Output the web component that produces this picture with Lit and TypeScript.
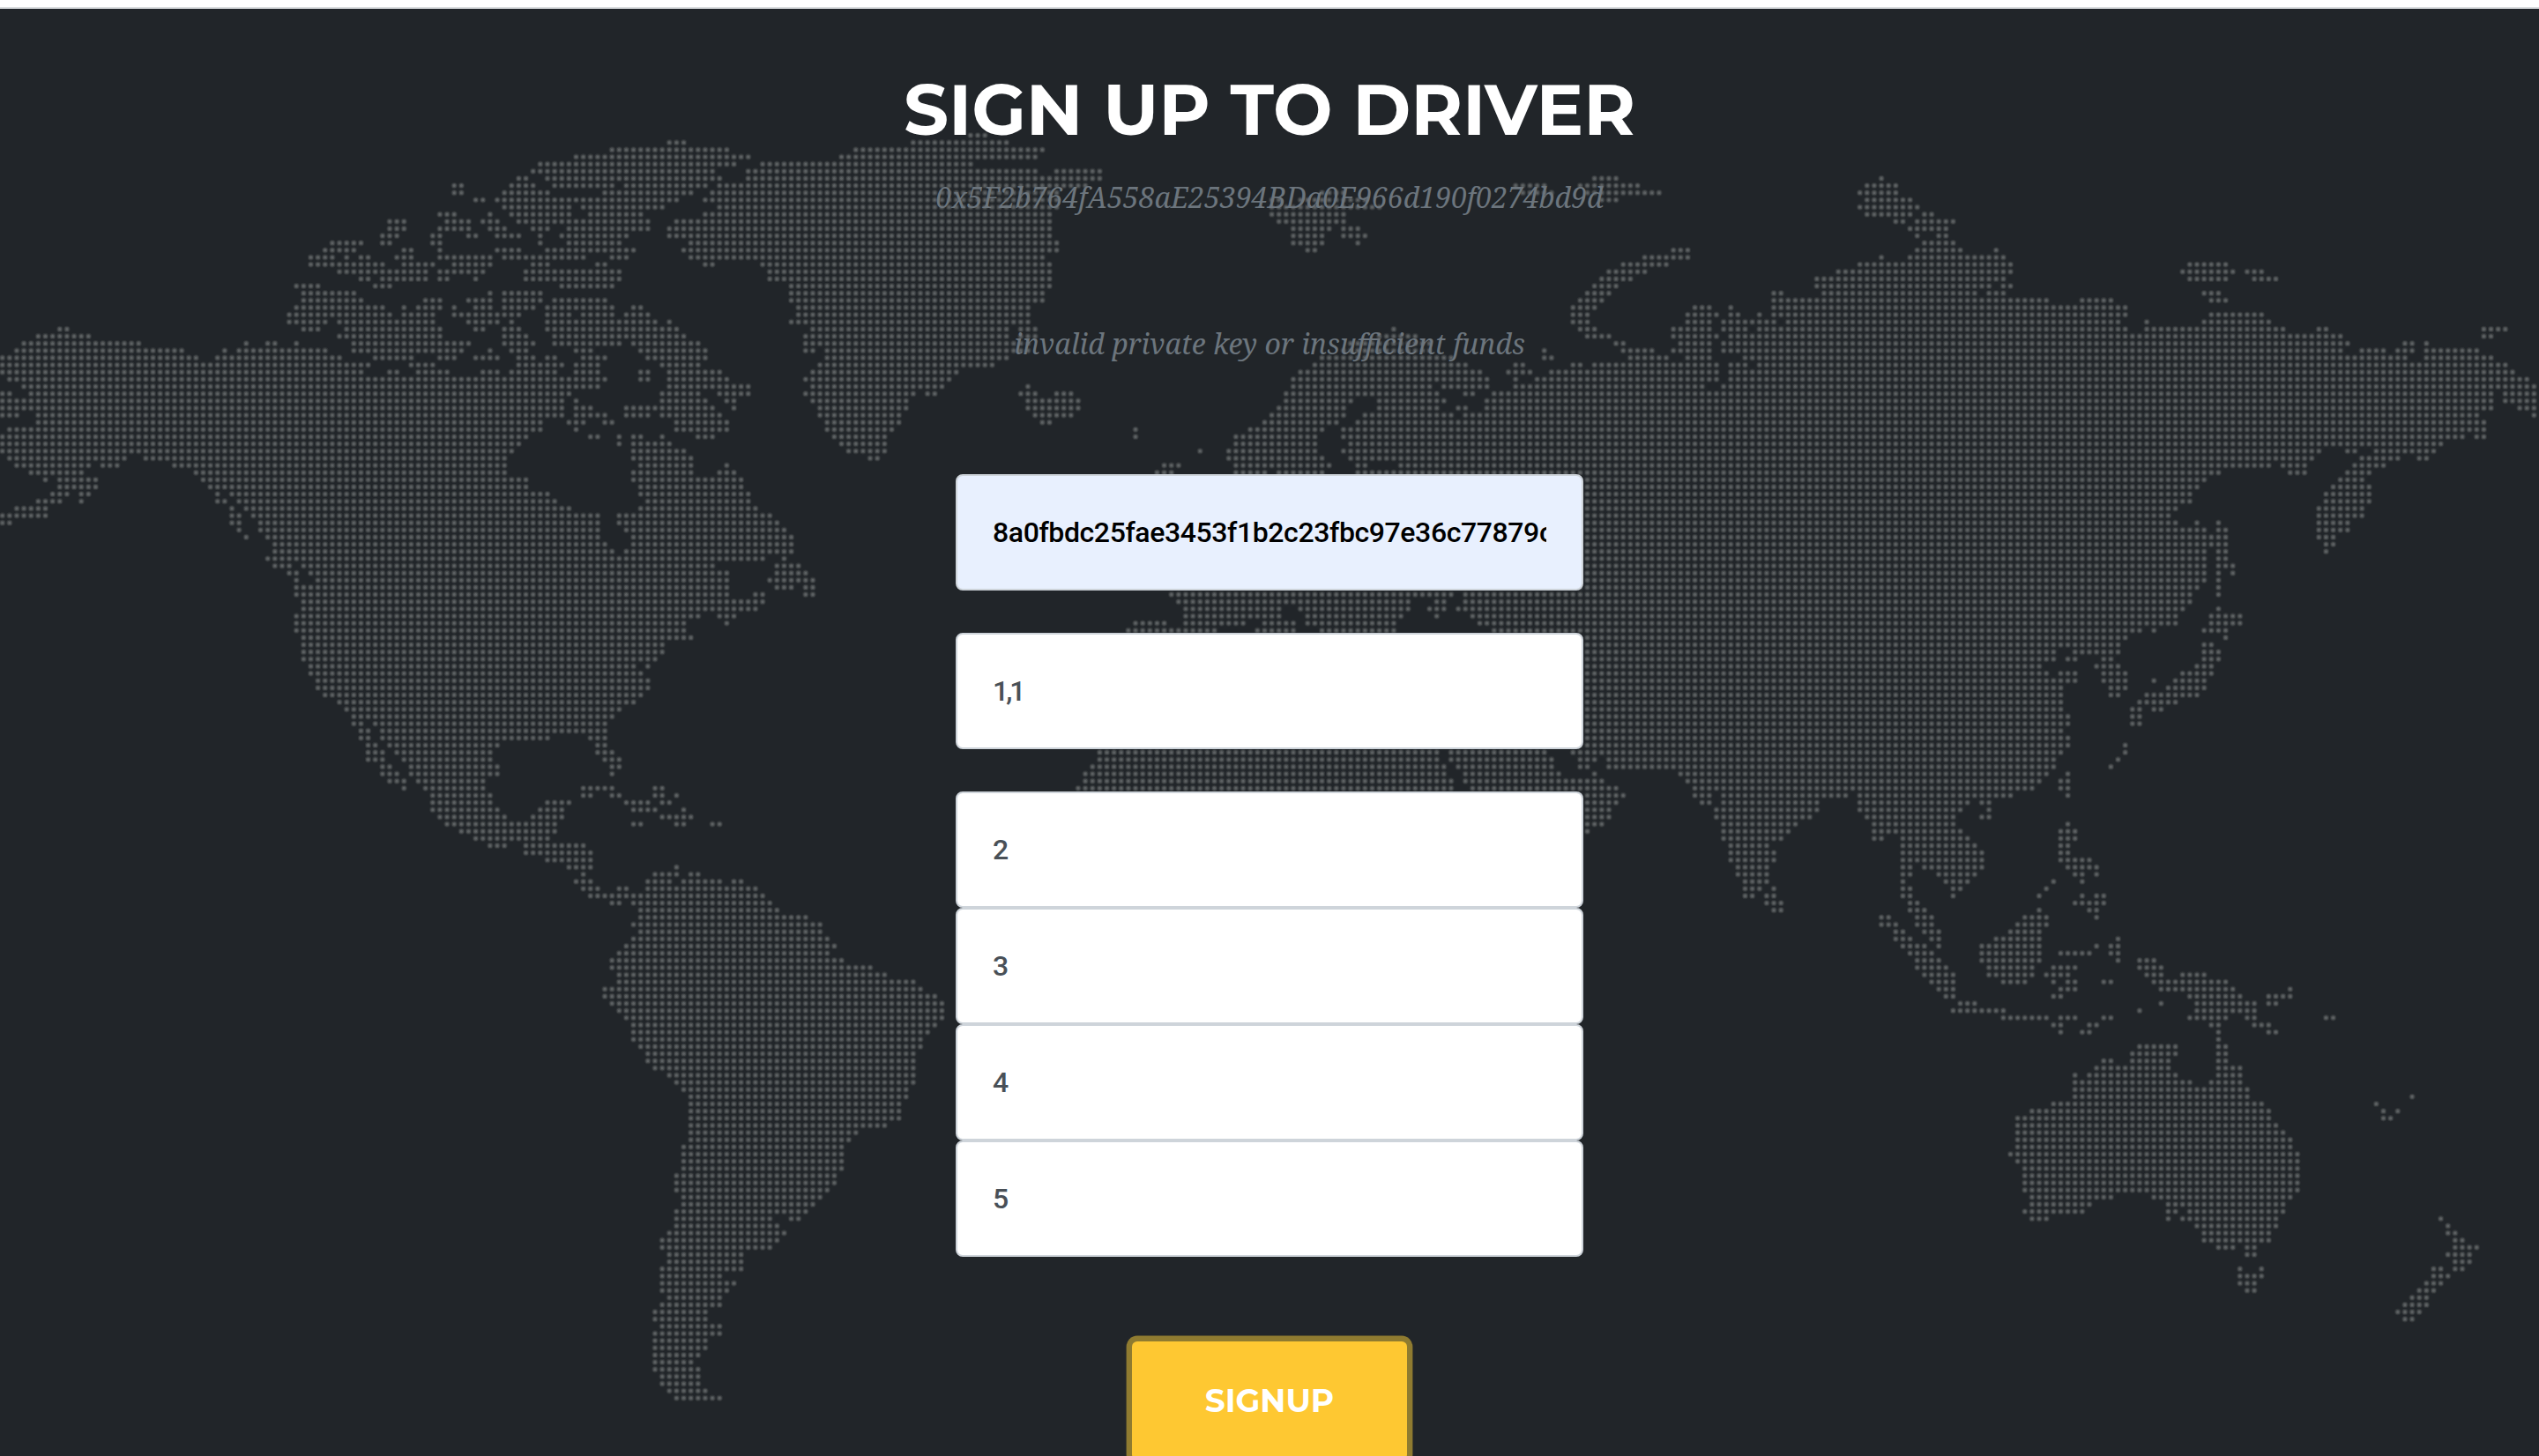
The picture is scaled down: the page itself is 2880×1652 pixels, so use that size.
import { LitElement, html, css, svg } from "lit";
import { customElement, property } from "lit/decorators.js";

/* Land cells of the dotted world map. Each line is "row: first-last first-last …",
   in grid columns. Regions may overlap. */
const AMERICAS = `
1: 93-95
2: 85-101
3: 80-104
4: 75-102
5: 74-99
6: 72-73 76-100
7: 63-64 71-74 77-85 87-98
8: 63-64 70-76 84-96
9: 66-67 69-94
10: 70-79 81-92
11: 61-63 68 71-79 82-89
12: 54-56 62-65 67-69 72-90
13: 54-56 61-65 68-70 74-76 79-90
14: 53-55 60-61 65-66 69-72 75 78-87
15: 46-50 53-54 60-61 75 79-86
16: 45-49 56-57 61 69-72 76-88
17: 43-46 48 50-51 55-57 61-68 70-81 85-87
18: 43-53 56-60 63-68 74-76 83-84
19: 47-59 61-67 73-86
20: 50-51 53-59 61-62 66 73-86
21: 41-44 52-54 78-85
22: 42-49 68 70-75
23: 42-50 59-61 65-68 70-75 77-84
24: 41-53 56 58-61 63 66-68 70-74 76-85 88-89
25: 40-54 56-60 63-72 76-79 81-85 87-90
26: 40-45 47-60 65-69 71 76-91 93
27: 8-9 42-44 48-61 66-67 70-72 76-94
28: 5-12 47-61 70-73 77-95
29: 3-19 34 37-38 41 49-65 70-74 77-86 88-97
30: 2-25 31 33-45 49-64 68 71-73 80-82 89-98
31: 0-27 30-47 52-57 61-63 66-69 72-74 76-77 81-84 90-98
32: 0-51 57-60 72-78 80-83 92-97
33: 0-50 54-55 58-62 67-69 71-77 80-83 89-90 93-100
34: 1-84 89-90 93-101
35: 3-83 93-104
36: 0-1 4-79 92-97 100-104
37: 0-78 80 92-98 101-102
38: 0-78 80-82 87-99 102
39: 0-2 5-78 80-84 87-90 92-100
40: 5-75 79-81 84-85 94-101
41: 1-75 80 94-101
42: 0-73 82-83 86 88-89 92 97-99
43: 0-72 86 88-93
44: 0-71 88-95
45: 1-17 20-70 88-96
46: 2-12 14-16 24-70 89-96 101
47: 4-11 27-70 88-96 100-102
48: 6 8-13 28-73 88-103
49: 8-13 29-73 89-103
50: 7-9 11-12 30 32-76 89-104
51: 5-8 11 30-31 33-77 90-104
52: 2-6 32 34-79 89-105
53: 0-6 32-33 35-83 86-107
54: 0-1 32-33 36-83 86-108
55: 33 36-83 87-109
56: 34 37-83 88-110
57: 38-84 88-110
58: 38-85 87-110
59: 37-106 109
60: 38-40 42-99 108-111
61: 40-41 43-101 108-112
62: 41 44-101 107-113
63: 41-101 108-110 112-113
64: 41-101 105-106 112-113
65: 42-106
66: 42-105
67: 41-97 100-102
68: 41-95 101
69: 41-95
70: 42-96
71: 42-92
72: 42-92
73: 42-91
74: 43-88 90
75: 43-89
76: 44-90
77: 44-90
78: 45-89
79: 47-88
80: 48-86
81: 49-85
82: 49-50 52-84
83: 50-51 53-84
84: 50-51 53-76 82-84
85: 51-52 54-69 83-84
86: 51-53 55-68 83-85
87: 51-53 56-68 84-86
88: 53-54 57-69 85-86
89: 53-55 57-69 85
90: 54-56 58-67
91: 56 59-67 81-85 91-92
92: 60-68 81-82 85-86 91-92 94
93: 60-68 76-79 87-90 92-93
94: 60-69 75-78 88-91 95
95: 61-70 74-78 92-96
96: 62-77 88-89 94-95 99-100
97: 64-77
98: 66-76
99: 68-70 73-81
100: 73-82
101: 76-82
102: 79-82 94
103: 81 91-94 96-97
104: 80-82 90-93 95-100 102-103
105: 81-83 86-87 90-105
106: 82-106
107: 85-86 88-107
108: 89-108
109: 89-112
110: 88-114
111: 89-114
112: 88-115
113: 87-116
114: 86-115
115: 85-117
116: 85-121
117: 86-123
118: 86-127
119: 84-128
120: 84-130
121: 85-131
122: 86-131
123: 87-131
124: 88-130
125: 88-129
126: 88-128
127: 89-128
128: 90-127
129: 90-127
130: 91-127
131: 93-127
132: 94-127
133: 95-126
134: 96-126
135: 96-125
136: 96-125
137: 96-125
138: 96-123
139: 96-119
140: 96-118
141: 95-117
142: 95-117
143: 95-117
144: 95-117
145: 94-116
146: 94-116
147: 94-115
148: 95-114
149: 95-113
150: 94-112
151: 94-107 110-111
152: 94-108
153: 93-109
154: 92-108
155: 92-107
156: 93-103
157: 93-103
158: 92-103
159: 92-100
160: 92-102
161: 92-101
162: 93-100
163: 92-100
164: 91-98
165: 91-98
166: 92-100
167: 91-100
168: 91-98
169: 91-98
170: 91-97
171: 91-96
172: 91-97
173: 92-97
174: 92-97
175: 93-98
176: 94-100`;

const GREENLAND = `
0: 135-137
1: 127-140
2: 119-145
3: 117-144
4: 106-135
5: 104-144 147-153
6: 104-153
7: 100-151
8: 99-147
9: 98-147
10: 100-147
11: 98-146
12: 94-146
13: 93-146
14: 93-146
15: 96-147
16: 95-147
17: 96-145
18: 98-99 106-146
19: 107-146
20: 107-146
21: 110-146
22: 110-145
23: 110-145
24: 111-143
25: 111-143
26: 110-143
27: 113-140 142-144
28: 112-140 142-144
29: 112-143
30: 112-113 115-143
31: 115-140
32: 114-138
33: 113-133
34: 112-132
35: 113-131 143
36: 112-127 129-130 142-144 147-149
37: 113-126 143-150
38: 114-126 143-150
39: 114-125 144-149
40: 115-125 145-146
41: 115-124 158
42: 116-123 158
43: 117-123
44: 118-123 167
45: 121-122`;

const EUROPE_AFRICA = `
8: 184-187
9: 177-178 181-190
10: 177-192
11: 177-187
12: 178-187
13: 180-185 187-189
14: 180-184 187-190
15: 180-184 189
16: 182-183
27: 194
28: 192-197
29: 188-199
30: 187-199
31: 184-202
32: 183-204
33: 181-206
34: 180-207
35: 180-199 201-207
36: 179-200 204-205
37: 179-188 192-201
38: 178-187 192-200 203-204
39: 177-187 190-202 204-210
40: 176-186 189-210
41: 174-184 187-210
42: 172-183 187-210
43: 172-183 188-210
44: 171-183 187-210
45: 171-184 188-210
46: 162-164 172-185 189-190 195-210
47: 161-163 172-176 178-184 189-210
64: 163-202
65: 164-196 200-201
66: 165-178 181-196 199-201
67: 165-178 182-195 200
68: 158-162 165-173 176-180 182-194
69: 157-169 175-180 184-194
86: 153-200 202-215
87: 153-200 202-216
88: 152-201 203-216
89: 151-201 204-217
90: 151-202 204-218
91: 150-202 205-218`;

const ASIA = `
6: 222-225 262
7: 211-215 220-228 260-264
8: 212-216 221-231 259-264
9: 223-225 260-266
10: 259-267
11: 260-266 268-269
12: 264-265 267-272
13: 266-271
14: 267 270-271
15: 268-272
16: 233-235 267-273 278
17: 229-235 262 266-279
18: 226-232 259-280
19: 224-229 256-280
20: 223-227 253-279
21: 222-225 253-277 279-280
22: 221-224 247-248 254-275 277-279
23: 220-223 247-285 290-294
24: 219-222 236-238 241 247-296
25: 219-221 235-239 241-242 245 247-296
26: 219-221 235-238 240-247 249-295 299
27: 220-222 233-238 240-243 245-296
28: 221-224 233-239 241-326
29: 225-226 234-238 240-327
30: 215 226-230 233-238 240-326
31: 215-216 227-232 235-238 243-335
32: 211-212 219-220 222-239 241-243 245-349
33: 210-213 216-239 241-350
34: 211 214-239 241-352
35: 211-237 240-353
36: 208-347 349-353
37: 207-347 349-353
38: 207-347 351-353
39: 204-345 353
40: 204-346
41: 204-346
42: 204-343 345-346
43: 204-340
44: 204-323 327-328 331-339
45: 204-322 329-334 337-338
46: 204-316 318-321 328-332
47: 204-309 319-321 327-330
48: 204-307 326-329
49: 204-306 325-330
50: 204-305 324-330
51: 204-305 324-330
52: 204-303 323-329
53: 204-302 323-329
54: 204-303 306 309 323-327
55: 204-307 309-310 323-327
56: 204-310 323-325
57: 204-310 324-325
58: 204-307 309-310 324
59: 204-307 309-310
60: 204-307 309-311
61: 204-307 309 311
62: 204-307 309
63: 204-306 309
64: 204-305 309
65: 204-305
66: 203-304 309
67: 205-303 308-312
68: 206-303 308-312
69: 208-298 300 307-310
70: 210-296 310
71: 210-295 307-308
72: 210-286 289-295 307-309
73: 210-286 288-289 293-294 307-309
74: 210-284 292-295 306-308
75: 210-285 287-289 293-296 304-308
76: 210-289 293-296 300 303-307
77: 210-287 294-296 302-307
78: 210-287 294-295 299-306
79: 210-287 298-303
80: 210-287 297-298 300-301
81: 210-288 297-298
82: 210-288 297-298
83: 210-287
84: 210-288
85: 210-288 296
86: 219-287 296
87: 220-222 224-286 295
88: 220-221 224-286 294
89: 222 234-285 288
90: 219-223 235-284 287-288
91: 219-225 236-283 287-288
92: 220-226 236-238 240-257 259-280 288
93: 219-225 237-238 240-253 259-274 276-277
94: 219-224 239-253 259-273 277
95: 219-224 239-252 260-272 276-277
96: 219-223 240-250 261-272 288
97: 219-221 240-249 261-273 287-289
98: 240-248 261-262 265-274 287-289
99: 241-246 265-275 287-288
100: 241-247 265-276 287-288
101: 241-247 265-276 287-291
102: 242-246 265-266 268-276 288-292
103: 242-246 265-266 270-275 289-290 292
104: 243-246 265 271-274 286 290
105: 243-245 247 265-266 272-273 285
106: 243-244 246-247 265-266 272 284 290 292-293
107: 246-248 266-267 289-293
108: 247-248 266-268 284 291-292
109: 262-263 267-269 282-285 292
110: 262-264 267-269 281-285
111: 264-265 268-270 280-284
112: 264-266 269-270 278-284 295
113: 265-268 270 276-284 292 294-295
114: 266-269 276-284 287-291 294-295`;

const SIBERIAN_ISLANDS = `
18: 305-310
19: 304-311 313-315
20: 305-310 314-317
22: 307-309
23: 308-310
25: 308-315
26: 307-316
27: 299-318 323-324 346-349
28: 346-347
29: 335-336 338
30: 329-332 334-336 338-345
31: 338-347`;

const OCEANIA = `
115: 267-270 276-284 295 298-300
116: 267-271 277-283 286-289 298-301
117: 268-272 277-283 285-288 299-301 304-307
118: 269-272 279-282 286 288-289 293-294 300-310
119: 270-272 287-289 301-311 319
120: 271-272 286-287 305-312 316-319
121: 273-275 301 306-314 316-317
122: 272-279 298 306-314
123: 279-285 287-289 293-294 305-310 313-314 324-325
124: 286-287 291-292 308-309 314-316
125: 287 290-291 309 316-317
126: 309
127: 298-303 309-310
128: 297-303 309-310
129: 293-294 297-302 309-310
130: 292-302 309-312
131: 289 291-303 309-312
132: 289-305 308-312
133: 289-313
134: 289-313 336
135: 286-315 331
136: 283-316 332 334
137: 281-316 332-333
138: 281-317
139: 281-318
140: 281-319
141: 281-319
142: 280-320
143: 281-320
144: 282-320
145: 282-320
146: 282-320
147: 282-320
148: 283-294 300-319
149: 283-291 302-318
150: 282-290 302-303 305-318
151: 283-285 302 304-317 340
152: 306-317 341
153: 307-316 341-342
154: 307-316 342-343
155: 309-311 313-314 342-345
156: 313-314 341-344
157: 342-344
158: 312 315 339-340 342-343
159: 312-315 339-341
160: 312-314 338-340
161: 313-314 337-339
162: 336-338
163: 335-338
164: 334-337
165: 335-336`;

const PITCH_X = 8.135;
const PITCH_Y = 8.14;
const ORIGIN_X = 2.7;
const ORIGIN_Y = 153.6;

/** One horizontal stroke per run; a zero-length round dash turns it into dots. */
function runsToPath(): string {
  const rows = new Map<number, Set<number>>();
  for (const region of [AMERICAS, GREENLAND, EUROPE_AFRICA, ASIA, SIBERIAN_ISLANDS, OCEANIA]) {
    for (const line of region.trim().split("\n")) {
      const [row, runs] = line.split(":");
      const cells = rows.get(+row) ?? new Set<number>();
      rows.set(+row, cells);
      for (const run of runs.trim().split(" ")) {
        const [a, b] = run.split("-").map(Number);
        for (let c = a; c <= (b ?? a); c++) cells.add(c);
      }
    }
  }
  let d = "";
  for (const [row, cells] of rows) {
    const y = (ORIGIN_Y + row * PITCH_Y).toFixed(2);
    for (const c of cells) {
      if (cells.has(c - 1)) continue;
      let end = c;
      while (cells.has(end + 1)) end++;
      const x = (ORIGIN_X + c * PITCH_X).toFixed(2);
      d += `M${x} ${y}h${((end - c) * PITCH_X + 0.5).toFixed(2)}`;
    }
  }
  return d;
}

@customElement("world-map")
class WorldMap extends LitElement {
  static styles = css`
    :host {
      display: block;
    }
    .map {
      display: block;
      width: 2880px;
      height: 1652px;
    }
    .dots {
      fill: none;
      stroke-linecap: round;
      stroke-dasharray: 0.01 8.125;
    }
    .halo {
      stroke: #303437;
      stroke-width: 7.4px;
    }
    .mid {
      stroke: #484c4e;
      stroke-width: 5.2px;
    }
    .core {
      stroke: #5c6062;
      stroke-width: 3px;
    }
  `;

  render() {
    const d = runsToPath();
    return html`<svg class="map" viewBox="0 0 2880 1652" aria-hidden="true">
      ${svg`<path class="dots halo" d=${d}></path>
      <path class="dots mid" d=${d}></path>
      <path class="dots core" d=${d}></path>`}
    </svg>`;
  }
}

@customElement("form-field")
class FormField extends LitElement {
  @property() value = "";
  @property({ type: Boolean, reflect: true }) autofilled = false;
  @property({ type: Boolean, reflect: true }) tight = false;

  static styles = css`
    :host {
      display: block;
    }
    .field {
      box-sizing: border-box;
      width: 712px;
      height: 132px;
      padding: 0 40px;
      border: 2px solid #ced4da;
      border-radius: 8px;
      background: #fff;
      color: #495057;
      font-family: "Roboto Slab", Roboto, sans-serif;
      font-weight: 500;
      font-size: 32px;
      letter-spacing: -0.4px;
      line-height: 128px;
    }
    .text {
      overflow: hidden;
      white-space: nowrap;
    }
    :host([autofilled]) .field {
      background: #e8f0fe;
      color: #000;
    }
    :host([tight]) .field {
      letter-spacing: -3px;
    }
  `;

  render() {
    return html`<div class="field" role="textbox"><div class="text">${this.value}</div></div>`;
  }
}

@customElement("app-root")
class AppRoot extends LitElement {
  static styles = css`
    :host {
      display: block;
      width: 2880px;
      height: 1652px;
      overflow: hidden;
      background: #212529;
    }
    .page {
      display: grid;
      height: 1652px;
    }
    .page > * {
      grid-area: 1 / 1;
    }
    .content {
      display: flex;
      flex-direction: column;
      align-items: center;
      min-width: 0;
    }
    .topbar {
      box-sizing: border-box;
      align-self: stretch;
      height: 10px;
      background: #fff;
      border-bottom: 2px solid #dadddf;
    }
    .title {
      margin: 67px 0 0;
      font-family: Montserrat, Inter, sans-serif;
      font-weight: 700;
      font-size: 80px;
      line-height: 96px;
      white-space: nowrap;
      color: #fff;
    }
    .note {
      margin: 0;
      font-family: "Droid Serif", "Noto Serif", "DejaVu Serif Condensed", "DejaVu Serif", serif;
      font-style: italic;
      font-size: 32px;
      line-height: 48px;
      white-space: nowrap;
      color: #6c757d;
    }
    .address {
      margin-top: 27px;
    }
    .error {
      margin-top: 118px;
    }
    .fields {
      display: flex;
      flex-direction: column;
      gap: 48px;
      margin-top: 124px;
    }
    .stack {
      display: flex;
      flex-direction: column;
    }
    .submit {
      flex: none;
      box-sizing: border-box;
      width: 312px;
      height: 134px;
      margin-top: 96px;
      padding: 0;
      border: 0;
      border-radius: 6px;
      background: #fec832;
      box-shadow: 0 0 0 6.4px rgba(254, 209, 55, 0.5);
      color: #fff;
      font-family: Montserrat, Inter, sans-serif;
      font-weight: 700;
      font-size: 36px;
      line-height: 134px;
    }
  `;

  render() {
    return html`
      <div class="page">
        <world-map></world-map>
        <main class="content">
          <div class="topbar"></div>
          <h2 class="title">SIGN UP TO DRIVER</h2>
          <p class="note address">0x5F2b764fA558aE25394BDa0E966d190f0274bd9d</p>
          <p class="note error">invalid private key or insufficient funds</p>
          <div class="fields">
            <form-field autofilled value="8a0fbdc25fae3453f1b2c23fbc97e36c77879c"></form-field>
            <form-field tight value="1,1"></form-field>
            <div class="stack">
              ${["2", "3", "4", "5"].map((v) => html`<form-field value=${v}></form-field>`)}
            </div>
          </div>
          <button class="submit">SIGNUP</button>
        </main>
      </div>
    `;
  }
}
